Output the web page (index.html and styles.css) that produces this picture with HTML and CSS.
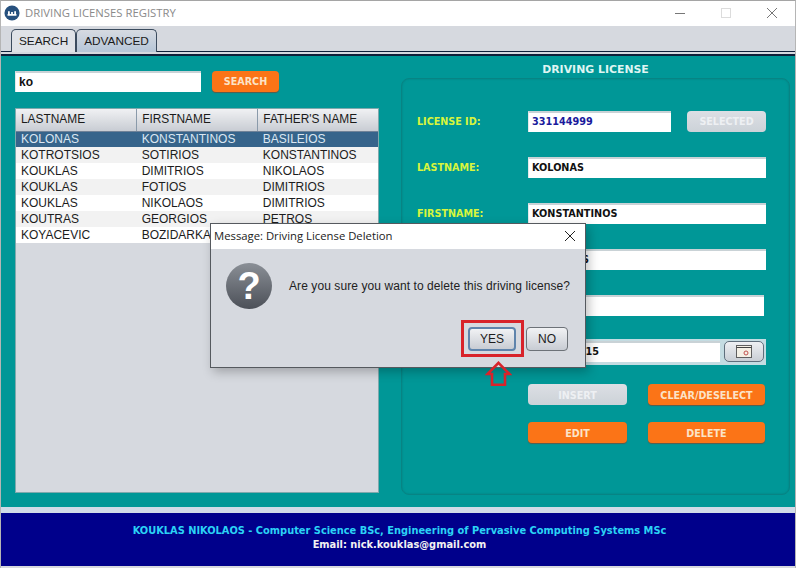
FILE: index.html
```html
<!DOCTYPE html>
<html lang="en">
<head>
    <meta charset="UTF-8">
    <meta name="viewport" content="width=device-width, initial-scale=1.0">
    <title>Driving Licenses Registry</title>
    <link rel="stylesheet" href="styles.css">
</head>
<body>
    <div class="window">
        <div class="titlebar">
            <svg class="logo" width="16" height="16" viewBox="0 0 18 18">
                <circle cx="9" cy="9" r="8.500" fill="#27517e"/>
                <path d="M4 10h10v2H4zM4.500 7h2v3h-2zM11.500 7h2v3h-2zM8 8h2v2H8z" fill="#fff"/>
            </svg>
            <span class="titlebar-text">DRIVING LICENSES REGISTRY</span>
            <div class="window-controls">
                <svg width="12" height="12" viewBox="0 0 12 12"><path d="M1 6.500h10" stroke="#777" fill="none"/></svg>
                <svg width="12" height="12" viewBox="0 0 12 12"><rect x="1.500" y="1.500" width="9" height="9" stroke="#dcdcdc" fill="none"/></svg>
                <svg width="12" height="12" viewBox="0 0 12 12"><path d="M1 1l10 10M11 1L1 11" stroke="#777" fill="none"/></svg>
            </div>
        </div>

        <div class="tabbar">
            <div class="tab">SEARCH</div>
            <div class="tab tab-active">ADVANCED</div>
        </div>

        <div class="main">
            <div class="left">
                <div class="searchrow">
                    <div class="field search-field">ko</div>
                    <button class="btn btn-orange search-btn">SEARCH</button>
                </div>
                <div class="tablewrap">
                    <table class="results">
                        <thead>
                            <tr><th>LASTNAME</th><th>FIRSTNAME</th><th>FATHER'S NAME</th></tr>
                        </thead>
                        <tbody>
                            <tr class="selected"><td>KOLONAS</td><td>KONSTANTINOS</td><td>BASILEIOS</td></tr>
                            <tr><td>KOTROTSIOS</td><td>SOTIRIOS</td><td>KONSTANTINOS</td></tr>
                            <tr><td>KOUKLAS</td><td>DIMITRIOS</td><td>NIKOLAOS</td></tr>
                            <tr><td>KOUKLAS</td><td>FOTIOS</td><td>DIMITRIOS</td></tr>
                            <tr><td>KOUKLAS</td><td>NIKOLAOS</td><td>DIMITRIOS</td></tr>
                            <tr><td>KOUTRAS</td><td>GEORGIOS</td><td>PETROS</td></tr>
                            <tr><td>KOYACEVIC</td><td>BOZIDARKA</td><td></td></tr>
                        </tbody>
                    </table>
                </div>
            </div>

            <div class="right">
                <h2 class="panel-title">DRIVING LICENSE</h2>
                <div class="panel">
                    <div class="formrow">
                        <label>LICENSE ID:</label>
                        <div class="field field-id">331144999</div>
                        <button class="btn btn-grey selected-btn">SELECTED</button>
                    </div>
                    <div class="formrow">
                        <label>LASTNAME:</label>
                        <div class="field field-wide">KOLONAS</div>
                    </div>
                    <div class="formrow">
                        <label>FIRSTNAME:</label>
                        <div class="field field-wide">KONSTANTINOS</div>
                    </div>
                    <div class="formrow">
                        <label>FATHER'S NAME:</label>
                        <div class="field field-wide">BASILEIOS</div>
                    </div>
                    <div class="formrow">
                        <label></label>
                        <div class="field field-fifth"></div>
                    </div>
                    <div class="formrow daterow">
                        <label></label>
                        <div class="datebox">
                            <div class="field field-date">12/05/2015</div>
                            <button class="calbtn">
                                <svg width="16" height="13" viewBox="0 0 16 13">
                                    <rect x="0.500" y="0.500" width="15" height="12" fill="#f4f0e6" stroke="#5f5f5f"/>
                                    <path d="M0.500 2.500h15" stroke="#444" fill="none"/>
                                    <circle cx="10" cy="8" r="2" fill="none" stroke="#c0504d"/>
                                </svg>
                            </button>
                        </div>
                    </div>
                    <div class="actions">
                        <button class="btn btn-grey">INSERT</button>
                        <button class="btn btn-orange">CLEAR/DESELECT</button>
                        <button class="btn btn-orange">EDIT</button>
                        <button class="btn btn-orange">DELETE</button>
                    </div>
                </div>
            </div>
        </div>

        <div class="gap"></div>
        <div class="footer">
            <div class="footer-line1">KOUKLAS NIKOLAOS - Computer Science BSc, Engineering of Pervasive Computing Systems MSc</div>
            <div class="footer-line2">Email: nick.kouklas@gmail.com</div>
        </div>
    </div>

    <div class="dialog">
        <div class="dialog-title">
            <span>Message: Driving License Deletion</span>
            <svg width="12" height="12" viewBox="0 0 12 12"><path d="M1 1l10 10M11 1L1 11" stroke="#222" fill="none"/></svg>
        </div>
        <div class="dialog-body">
            <div class="question">?</div>
            <div class="dialog-text">Are you sure you want to delete this driving license?</div>
        </div>
        <div class="dialog-buttons">
            <button class="dlg-btn dlg-yes">YES</button>
            <button class="dlg-btn dlg-no">NO</button>
        </div>
    </div>

    <div class="highlight"></div>
    <svg class="arrow" width="27" height="25" viewBox="0 0 27 25">
        <path d="M13.500 1.800L24.500 13H20V23.700H7V13H2.500Z" fill="none" stroke="#d8232a" stroke-width="2.600"/>
    </svg>
</body>
</html>
```

FILE: styles.css
```css
* {
    box-sizing: border-box;
}
html, body {
    margin: 0;
    padding: 0;
}
body {
    width: 796px;
    height: 568px;
    overflow: hidden;
    position: relative;
    font-family: "Liberation Sans", Arial, sans-serif;
    background-color: #d6d9df;
}
.window {
    height: 568px;
    display: flex;
    flex-direction: column;
    border-top: 1px solid #a5a5a5;
    border-left: 1px solid #b5b5b5;
    border-right: 1px solid #b5b5b5;
}

/* title bar */
.titlebar {
    height: 25px;
    flex: none;
    background-color: #fff;
    display: flex;
    align-items: center;
    padding: 0 0 2px 3px;
}
.logo {
    margin-right: 5px;
}
.titlebar-text {
    font-family: "Open Sans", sans-serif;
    font-size: 11.300px;
    color: #8a8a8a;
}
.window-controls {
    margin-left: auto;
    display: flex;
    gap: 34px;
    padding-right: 17px;
}

/* tabs */
.tabbar {
    height: 30px;
    flex: none;
    display: flex;
    align-items: flex-end;
    padding: 3px 0 0 10px;
    background-color: #d6d9df;
    border-bottom: 2px solid #10203a;
    box-shadow: inset 0 -2px 0 #d6d9df, inset 0 -3px 0 #10203a;
}
.tab {
    height: 23px;
    margin-bottom: 2px;
    padding: 4px 7px 0 7px;
    font-size: 11.800px;
    color: #1a1a1a;
    border: 1px solid #3b4b5e;
    border-bottom: none;
    border-radius: 5px 5px 0 0;
    background-color: #dfe2e7;
}
.tab-active {
    padding: 4px 7px 0 7px;
    background: linear-gradient(#d6dae1, #b6c6d8);
}

/* main teal area */
.main {
    height: 451px;
    flex: none;
    display: flex;
    background-color: #009797;
}
.left {
    width: 400px;
    flex: none;
    padding: 15px 0 0 14px;
}
.searchrow {
    display: flex;
    gap: 11px;
    margin-bottom: 16px;
}
.field {
    height: 21px;
    padding: 2px 3px 0;
    background-color: #fff;
    border-top: 2px solid #c9d2d6;
    border-left: 1px solid #e3e8ea;
    font-family: "DejaVu Sans", sans-serif;
    font-size: 9.700px;
    font-weight: bold;
    line-height: 14px;
    color: #111;
}
.search-field {
    width: 186px;
    font-family: "Liberation Sans", sans-serif;
    font-size: 12px;
}
.search-btn {
    width: 67px;
}
.btn {
    height: 21px;
    padding: 0;
    border: none;
    border-radius: 4px;
    font-family: "DejaVu Sans", sans-serif;
    font-size: 9.600px;
    font-weight: bold;
    color: #fbe3c8;
}
.btn-orange {
    background-color: #fb7417;
    box-shadow: 0 1px 1px #5b5b4b;
}
.btn-grey {
    background: linear-gradient(#dcdfe4, #ccd2d8);
    color: #eef0f3;
}

/* results table */
.tablewrap {
    width: 364px;
    height: 385px;
    background-color: #d6d9df;
    border: 1px solid #7fa9ad;
}
.results {
    width: 100%;
    border-collapse: collapse;
    table-layout: fixed;
    font-size: 12px;
}
.results th {
    height: 22px;
    padding: 0 0 2px 5px;
    text-align: left;
    font-size: 11.900px;
    font-weight: normal;
    color: #1a1a1a;
    background: linear-gradient(#f0f1f3, #c8ccd3);
    border-right: 1px solid #8a9aaa;
    border-bottom: 1px solid #6f8298;
}
.results th:last-child {
    border-right: none;
}
.results td {
    height: 16px;
    padding: 0 0 0 5px;
    color: #1c1c1c;
    background-color: #fff;
    white-space: nowrap;
    line-height: 14px;
}
.results th:nth-child(3), .results td:nth-child(3) {
    padding-left: 5.500px;
}
.results tbody tr:nth-child(even) td {
    background-color: #f2f2f2;
}
.results tbody tr.selected td {
    background-color: #36648b;
    color: #dbe7f2;
}

/* right panel */
.right {
    width: 389px;
    flex: none;
    padding-top: 7px;
}
.panel-title {
    margin: 0 0 1px;
    height: 14px;
    text-align: center;
    font-family: "DejaVu Sans", sans-serif;
    font-size: 10.900px;
    font-weight: bold;
    line-height: 14px;
    color: #dff5f2;
}
.panel {
    height: 417px;
    padding-top: 32px;
    border: 1px solid #078484;
    border-radius: 8px;
    box-shadow: inset 0 0 2px #067c7c;
}
.formrow {
    display: flex;
    align-items: center;
    height: 21px;
    margin-bottom: 25px;
    padding-left: 15px;
}
.formrow label {
    width: 111px;
    flex: none;
    font-family: "DejaVu Sans", sans-serif;
    font-size: 9.600px;
    font-weight: bold;
    color: #d8f53c;
}
.field-id {
    width: 143px;
    color: #1a1a9c;
}
.selected-btn {
    width: 79px;
    margin-left: 16px;
}
.field-wide {
    width: 238px;
}
.field-fifth {
    width: 236px;
}
.daterow {
    margin-bottom: 22px;
}
.datebox {
    width: 238px;
    display: flex;
    justify-content: space-between;
    align-items: center;
    height: 26px;
    padding-right: 2px;
    background-color: #c4dce2;
}
.field-date {
    width: 192px;
    padding-left: 9px;
}
.calbtn {
    width: 40px;
    height: 21px;
    padding: 2px 0 0;
    border: 1px solid #5f6e7c;
    border-radius: 5px;
    background: linear-gradient(#eef0f3, #c9ced5);
}
.actions {
    display: grid;
    grid-template-columns: 99px 117px;
    column-gap: 21px;
    row-gap: 17px;
    margin-left: 126px;
}
.actions .btn {
    padding-top: 1px;
}

/* footer */
.gap {
    height: 6px;
    flex: none;
    background-color: #d0dbe8;
}
.footer {
    height: 53px;
    flex: none;
    padding: 11px 0 0 3px;
    text-align: center;
    font-family: "DejaVu Sans Condensed", "DejaVu Sans", sans-serif;
    font-size: 10.950px;
    font-weight: bold;
    line-height: 14px;
    background-color: #00008b;
}
.footer-line1 {
    color: #2bd3f5;
}
.footer-line2 {
    color: #f2f2f2;
}

/* confirmation dialog */
.dialog {
    position: absolute;
    left: 210px;
    top: 223px;
    width: 376px;
    height: 145px;
    background-color: #d6d9df;
    border: 1px solid #55595e;
    box-shadow: 3px 4px 10px rgba(0,0,0,0.25);
}
.dialog-title {
    height: 25px;
    display: flex;
    align-items: center;
    justify-content: space-between;
    padding: 0 9px 2px 3px;
    background-color: #fff;
    font-family: "Open Sans", sans-serif;
    font-size: 11.300px;
    color: #222;
}
.dialog-body {
    display: flex;
    align-items: center;
    padding: 14px 0 0 15px;
}
.question {
    width: 46px;
    height: 46px;
    flex: none;
    border-radius: 50%;
    text-align: center;
    font-family: "Liberation Sans", sans-serif;
    font-size: 38px;
    font-weight: bold;
    line-height: 46px;
    color: #fff;
    background: linear-gradient(#8a8f96, #4c5058);
}
.dialog-text {
    margin-left: 17px;
    font-size: 12px;
    letter-spacing: 0.080px;
    color: #222;
}
.dialog-buttons {
    display: flex;
    justify-content: flex-end;
    gap: 10px;
    padding: 18px 17px 0 0;
}
.dlg-btn {
    height: 24px;
    padding: 0;
    font-family: "Liberation Sans", sans-serif;
    font-size: 12px;
    color: #1c1c1c;
    border: 1px solid #6d7278;
    border-radius: 4px;
    background: linear-gradient(#f1f2f4, #c8ccd3);
}
.dlg-yes {
    width: 48px;
    border: 2px solid #5f84ac;
}
.dlg-no {
    width: 42px;
}

/* annotations drawn on the screenshot */
.highlight {
    position: absolute;
    left: 461px;
    top: 320px;
    width: 63px;
    height: 37px;
    border: 3px solid #d8232a;
}
.arrow {
    position: absolute;
    left: 485px;
    top: 361px;
}
```
